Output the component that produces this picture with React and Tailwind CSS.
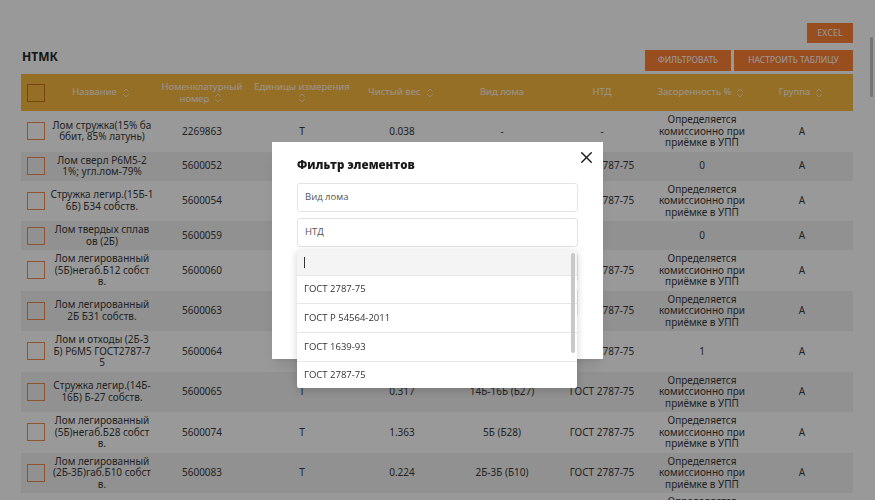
import React from "react";
import { ChevronsUpDown, X } from "lucide-react";

const OPR = ["Определяется", "комиссионно при", "приёмке в УПП"];

const ROWS = [
  { name: ["Лом стружка(15% ба", "ббит, 85% латунь)"], code: "2269863", unit: "Т", weight: "0.038", kind: "-", ntd: "-", dirt: OPR, group: "А" },
  { name: ["Лом сверл Р6М5-2", "1%; угл.лом-79%"], code: "5600052", unit: "Т", weight: "0.052", kind: "Р6М5", ntd: "ГОСТ 2787-75", dirt: ["0"], group: "А" },
  { name: ["Стружка легир.(15Б-1", "6Б) Б34 собств."], code: "5600054", unit: "Т", weight: "0.114", kind: "15Б-16Б (Б34)", ntd: "ГОСТ 2787-75", dirt: OPR, group: "А" },
  { name: ["Лом твердых сплав", "ов (2Б)"], code: "5600059", unit: "Т", weight: "0.009", kind: "2Б", ntd: "", dirt: ["0"], group: "А" },
  { name: ["Лом легированный", "(5Б)негаб.Б12 собст", "в."], code: "5600060", unit: "Т", weight: "0.871", kind: "5Б (Б12)", ntd: "ГОСТ 2787-75", dirt: OPR, group: "А" },
  { name: ["Лом легированный", "2Б Б31 собств."], code: "5600063", unit: "Т", weight: "0.402", kind: "2Б (Б31)", ntd: "ГОСТ 2787-75", dirt: OPR, group: "А" },
  { name: ["Лом и отходы (2Б-3", "Б) Р6М5 ГОСТ2787-7", "5"], code: "5600064", unit: "Т", weight: "0.145", kind: "2Б-3Б", ntd: "ГОСТ 2787-75", dirt: ["1"], group: "А" },
  { name: ["Стружка легир.(14Б-", "16Б) Б-27 собств."], code: "5600065", unit: "Т", weight: "0.317", kind: "14Б-16Б (Б27)", ntd: "ГОСТ 2787-75", dirt: OPR, group: "А" },
  { name: ["Лом легированный", "(5Б)негаб.Б28 собст", "в."], code: "5600074", unit: "Т", weight: "1.363", kind: "5Б (Б28)", ntd: "ГОСТ 2787-75", dirt: OPR, group: "А" },
  { name: ["Лом легированный", "(2Б-3Б)габ.Б10 собст", "в."], code: "5600083", unit: "Т", weight: "0.224", kind: "2Б-3Б (Б10)", ntd: "ГОСТ 2787-75", dirt: OPR, group: "А" },
  { name: ["Лом легированный", "(2Б)габ.Б11 собств."], code: "5600084", unit: "Т", weight: "0.510", kind: "2Б (Б11)", ntd: "ГОСТ 2787-75", dirt: OPR, group: "А" },
];

const HEADERS = [
  { label: ["Название"], sort: true },
  { label: ["Номенклатурный", "номер"], sort: true },
  { label: ["Единицы измерения"], sort: true, iconBelow: true },
  { label: ["Чистый вес"], sort: true },
  { label: ["Вид лома"] },
  { label: ["НТД"] },
  { label: ["Засоренность %"], sort: true },
  { label: ["Группа"], sort: true },
];

const NTD_OPTIONS = ["ГОСТ 2787-75", "ГОСТ Р 54564-2011", "ГОСТ 1639-93", "ГОСТ 2787-75", "ГОСТ 1639-2009"];

const tableFont = { fontFamily: '"Noto Sans", "DejaVu Sans", sans-serif' };
const modalFont = { fontFamily: '"Open Sans", "Noto Sans", sans-serif' };

const Cell = ({ lines }) => (
  <div className="flex w-[100px] flex-col items-center justify-center py-[3px] text-center">
    {lines.map((line, i) => (
      <span key={i} className="block whitespace-nowrap leading-[11.5px]">
        {line}
      </span>
    ))}
  </div>
);

const SortIcon = () => <ChevronsUpDown size={12} strokeWidth={1.5} className="shrink-0" />;

const HeaderCell = ({ label, sort, iconBelow }) => {
  if (label.length > 1 || iconBelow) {
    const last = iconBelow ? null : label[label.length - 1];
    const first = iconBelow ? label : label.slice(0, -1);
    return (
      <div className="flex w-[100px] flex-col items-center justify-center text-center leading-[11.5px]">
        {first.map((l) => (
          <span key={l} className="whitespace-nowrap">{l}</span>
        ))}
        {last ? (
          <span className="flex items-center gap-[3px]">
            {last}
            {sort && <SortIcon />}
          </span>
        ) : (
          <SortIcon />
        )}
      </div>
    );
  }
  return (
    <div className="flex w-[100px] items-center justify-center gap-[3px] text-center">
      <span className="whitespace-nowrap">{label[0]}</span>
      {sort && <SortIcon />}
    </div>
  );
};

const Field = ({ placeholder, children }) => (
  <div className="relative">
    <div className="flex h-[29px] items-center rounded-[3px] border border-[#e3e3e3] bg-white px-[7px] text-[9.5px] text-[#555]">
      {placeholder}
    </div>
    {children}
  </div>
);

const FilterModal = () => (
  <div className="fixed inset-0 flex items-center justify-center bg-black/40" style={modalFont}>
    <div className="relative w-[331px] bg-white px-[25px] pb-[13px] pt-[14px] shadow-lg">
      <button className="absolute right-[7px] top-[6px] text-[#1a1a1a]">
        <X size={19} strokeWidth={1.7} />
      </button>
      <h2 className="mb-[9px] text-[11.5px] font-extrabold leading-[18px] text-[#1a1a1a]">Фильтр элементов</h2>
      <div className="flex flex-col gap-[6px]">
        <Field placeholder="Вид лома" />
        <Field placeholder="НТД">
          <div className="absolute left-0 right-[1px] top-full z-10 mt-[3px] h-[138px] overflow-hidden rounded-[2px] bg-white shadow-[0_2px_8px_rgba(0,0,0,0.18)]">
            <div className="flex h-[26px] items-center border-b border-[#e6e6e6] bg-[#f4f4f4] px-[7px]">
              <span className="block h-[11px] w-px bg-[#333]" />
            </div>
            {NTD_OPTIONS.map((opt, i) => (
              <div
                key={i}
                className="flex h-[28.7px] items-center border-b border-[#e6e6e6] px-[7px] text-[9.5px] text-[#333]"
              >
                {opt}
              </div>
            ))}
            <div className="absolute right-[2px] top-[3px] h-[100px] w-[4px] rounded-full bg-[#c8c8c8]" />
          </div>
        </Field>
        <Field placeholder="Засоренность %" />
        <Field placeholder="Группа" />
      </div>
      <button className="mt-[6px] h-[23px] rounded-[2px] bg-[#f08a3c] px-4 text-[9px] uppercase text-white">
        Применить
      </button>
    </div>
  </div>
);

const App = () => {
  return (
    <div className="relative h-[500px] overflow-hidden bg-white text-[#3a3a3a]" style={tableFont}>
      <div className="px-[21px] pr-[22px] pt-[23px]">
        <div className="flex justify-end">
          <button className="h-[20px] w-[46px] bg-[#ff8234] text-[8.5px] uppercase tracking-wide text-white">
            Excel
          </button>
        </div>
        <div className="mt-[7px] flex items-start justify-between">
          <h1 className="pl-px text-[12px] font-bold leading-[14px] text-[#222]">НТМК</h1>
          <div className="flex gap-[3px]">
            <button className="h-[21px] w-[86px] bg-[#ff8234] text-[8.5px] uppercase text-white">
              Фильтровать
            </button>
            <button className="h-[21px] w-[119px] bg-[#ff8234] text-[8.5px] uppercase text-white">
              Настроить таблицу
            </button>
          </div>
        </div>

        <div className="mt-[3px]">
          <div className="flex h-[37px] items-center bg-[#fbb942] text-[9.5px] text-[#fff6ea]">
            <div className="flex w-[31px] justify-center pr-[1px]">
              <span className="block h-[18px] w-[18px] border border-[#c9741f]" />
            </div>
            {HEADERS.map((h) => (
              <HeaderCell key={h.label[0]} {...h} />
            ))}
          </div>

          {ROWS.map((row, i) => (
            <div key={row.code} className={`flex text-[10px] ${i % 2 === 1 ? "bg-[#f2f2f2]" : "bg-white"}`}>
              <div className="flex w-[31px] items-center justify-center pr-[1px]">
                <span className="block h-[18px] w-[18px] border-[1.5px] border-[#f08a4b]" />
              </div>
              <Cell lines={row.name} />
              <Cell lines={[row.code]} />
              <Cell lines={[row.unit]} />
              <Cell lines={[row.weight]} />
              <Cell lines={[row.kind]} />
              <Cell lines={[row.ntd]} />
              <Cell lines={row.dirt} />
              <Cell lines={[row.group]} />
            </div>
          ))}
        </div>
      </div>
      <div className="absolute right-[2px] top-[37px] h-[60px] w-[3px] rounded-full bg-[#c4c4c4]" />
      <FilterModal />
    </div>
  );
};

export default App;
